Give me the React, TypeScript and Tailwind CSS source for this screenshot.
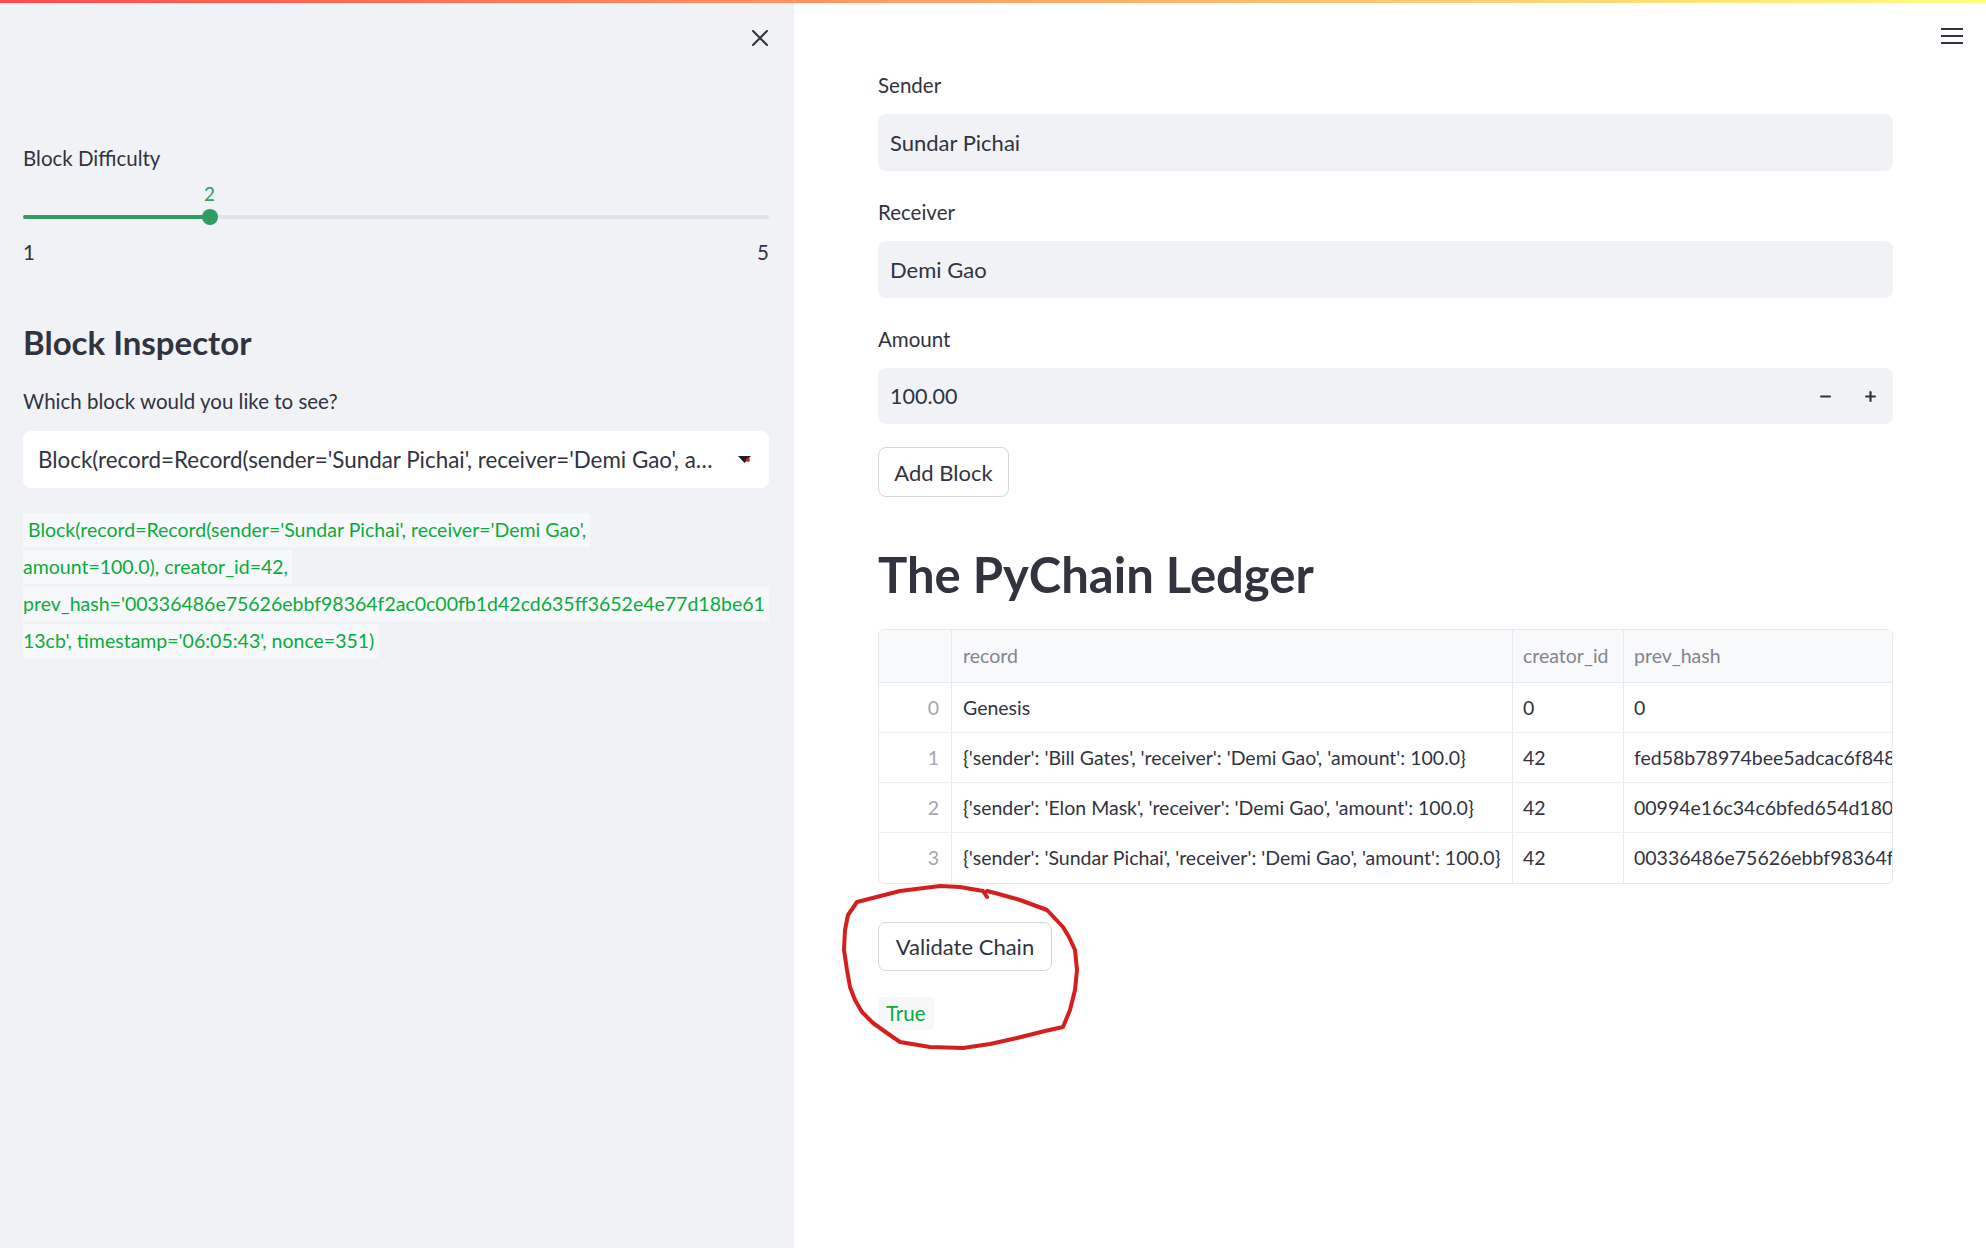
import React from 'react';
import { Minus, Plus } from 'lucide-react';

const rows = [
  { idx: 0, record: 'Genesis', creator: '0', prev: '0' },
  {
    idx: 1,
    record: "{'sender': 'Bill Gates', 'receiver': 'Demi Gao', 'amount': 100.0}",
    creator: '42',
    prev: 'fed58b78974bee5adcac6f848a1d0e4c7b2f93a5d61e08c4f7b3a92e1d5c6f08',
  },
  {
    idx: 2,
    record: "{'sender': 'Elon Mask', 'receiver': 'Demi Gao', 'amount': 100.0}",
    creator: '42',
    prev: '00994e16c34c6bfed654d180c2e7a1b39f4d8c0e52a6b71f3d9e84c05a2b6d1f',
  },
  {
    idx: 3,
    record: "{'sender': 'Sundar Pichai', 'receiver': 'Demi Gao', 'amount': 100.0}",
    creator: '42',
    prev: '00336486e75626ebbf98364f2ac0c00fb1d42cd635ff3652e4e77d18be6113cb',
  },
];

const codeLines = [
  "\u00a0Block(record=Record(sender='Sundar Pichai', receiver='Demi Gao',",
  'amount=100.0), creator_id=42,',
  "prev_hash='00336486e75626ebbf98364f2ac0c00fb1d42cd635ff3652e4e77d18be61",
  "13cb', timestamp='06:05:43', nonce=351)",
];

const Field = ({ label, value }: { label: string; value: string }) => (
  <div className="mb-[27px]">
    <div className="h-[28px] leading-[28px] text-[20.5px] mb-[15px]">{label}</div>
    <div className="h-[57px] rounded-[8px] bg-[#f0f2f6] flex items-center px-[12px] text-[22px]">{value}</div>
  </div>
);

export default function App() {
  return (
    <div className="w-[1986px] h-[1248px] flex flex-col bg-white text-[#31333f] font-['Lato','Liberation_Sans',sans-serif] overflow-hidden relative">
      {/* decoration bar */}
      <div className="h-[3px] w-full bg-[linear-gradient(90deg,#ff4b4b,#fffd80)]" />

      <div className="flex flex-1">
        {/* Sidebar */}
        <aside className="w-[794px] shrink-0 bg-[#f0f2f6] pl-[23px] pr-[25px]">
          <div className="mt-[27px] h-[16px] flex justify-end pr-[1px]">
            <svg width="16" height="16" viewBox="0 0 16 16" stroke="#31333f" strokeWidth="2" strokeLinecap="round">
              <path d="M1 1L15 15M15 1L1 15" />
            </svg>
          </div>

          <div className="mt-[98px] h-[28px] leading-[28px] text-[20.5px]">Block Difficulty</div>

          <div className="mt-[11px] relative h-[50px]">
            <div className="absolute left-[25%] -translate-x-1/2 top-0 text-[19px] leading-[22px] text-[#2f9c64]">2</div>
            <div className="absolute left-0 right-0 top-[32px] h-[4px] rounded-full bg-[#dfe3ea]" />
            <div className="absolute left-0 w-[25%] top-[32px] h-[4px] rounded-full bg-[#2f9c64]" />
            <div className="absolute left-[25%] -translate-x-1/2 top-[26px] w-[16px] h-[16px] rounded-full bg-[#2f9c64]" />
          </div>
          <div className="mt-[5px] flex justify-between h-[28px] leading-[28px] text-[20.5px]">
            <span>1</span>
            <span>5</span>
          </div>

          <h3 className="mt-[58px] h-[36px] leading-[36px] text-[33px] font-bold">Block Inspector</h3>

          <div className="mt-[27px] h-[28px] leading-[28px] text-[20.5px]">Which block would you like to see?</div>

          <div className="mt-[16px] h-[57px] rounded-[8px] bg-white flex items-center pl-[15px] pr-[18px]">
            <div className="flex-1 whitespace-nowrap overflow-hidden text-ellipsis text-[22.4px]">
              Block(record=Record(sender='Sundar Pichai', receiver='Demi Gao', a…
            </div>
            <div className="relative ml-[18px] w-[13px] h-[8px]">
              <svg width="13" height="8" viewBox="0 0 13 8">
                <path d="M0 0H13L6.5 7Z" fill="#1f1f24" />
              </svg>
              <div className="absolute right-[1px] top-[2px] w-[4px] h-[4px] rounded-full bg-[#e0242a]" />
            </div>
          </div>

          <div className="mt-[25px] flex flex-col gap-[3px] text-[19.5px] text-[#09ab3b]">
            {codeLines.map((l, i) => (
              <div key={i} className="w-fit h-[34px] leading-[34px] bg-[#f7f8fa] pr-[4px] whitespace-nowrap">
                {l}
              </div>
            ))}
          </div>
        </aside>

        {/* Main */}
        <main className="flex-1 relative pl-[84px]">
          <div className="absolute right-[23px] top-[25px] flex flex-col gap-[5px]">
            <div className="w-[22px] h-[2px] bg-[#31333f]" />
            <div className="w-[22px] h-[2px] bg-[#31333f]" />
            <div className="w-[22px] h-[2px] bg-[#31333f]" />
          </div>

          <div className="w-[1015px] pt-[68px]">
            <Field label="Sender" value="Sundar Pichai" />
            <Field label="Receiver" value="Demi Gao" />

            <div>
              <div className="h-[28px] leading-[28px] text-[20.5px] mb-[15px]">Amount</div>
              <div className="h-[56px] rounded-[8px] bg-[#f0f2f6] flex items-center pl-[12px] pr-[15px] text-[21.5px]">
                <span className="flex-1">100.00</span>
                <div className="flex items-center gap-[30px]">
                  <Minus size={15} strokeWidth={3.5} className="text-[#31333f]" />
                  <Plus size={15} strokeWidth={3.5} className="text-[#31333f]" />
                </div>
              </div>
            </div>

            <button className="mt-[23px] w-[131px] h-[50px] rounded-[8px] border border-[#d6d6d9] bg-white text-[22px]">
              Add Block
            </button>

            <h1 className="mt-[47px] h-[60px] leading-[60px] text-[49px] font-bold">The PyChain Ledger</h1>

            <div className="mt-[25px] border border-[#e6e9ef] rounded-[6px] overflow-hidden text-[19.5px]">
              <div className="flex h-[53px] bg-[#f8f9fb] border-b border-[#e6e9ef] text-[#83858c]">
                <div className="w-[73px] border-r border-[#e6e9ef]" />
                <div className="w-[561px] border-r border-[#e6e9ef] flex items-center px-[11px]">record</div>
                <div className="w-[111px] border-r border-[#e6e9ef] flex items-center px-[10px]">creator_id</div>
                <div className="flex-1 flex items-center px-[10px]">prev_hash</div>
              </div>
              {rows.map((r, i) => (
                <div key={r.idx} className={`flex h-[50px] ${i < rows.length - 1 ? 'border-b border-[#eef0f4]' : ''}`}>
                  <div className="w-[73px] border-r border-[#e6e9ef] flex items-center justify-end pr-[12px] text-[#a3a6ae]">{r.idx}</div>
                  <div className="w-[561px] border-r border-[#e6e9ef] flex items-center px-[11px] whitespace-nowrap overflow-hidden">{r.record}</div>
                  <div className="w-[111px] border-r border-[#e6e9ef] flex items-center px-[10px]">{r.creator}</div>
                  <div className="flex-1 min-w-0 flex items-center pl-[10px] whitespace-nowrap overflow-hidden">{r.prev}</div>
                </div>
              ))}
            </div>

            <button className="mt-[38px] block w-[174px] h-[49px] rounded-[8px] border border-[#d6d6d9] bg-white text-[22px]">
              Validate Chain
            </button>

            <div className="mt-[26px] w-fit h-[33px] leading-[33px] px-[8px] bg-[#f6f7f9] rounded-[4px] text-[20.5px] text-[#09ab3b]">
              True
            </div>
          </div>
        </main>
      </div>

      {/* hand-drawn annotation */}
      <svg className="absolute left-0 top-0 pointer-events-none" width="1986" height="1248">
        <path
          d="M987 897 L983 891 L960 887 L940 886 L900 891 L857 902 L848 915 L845 930 L844 950 L847 970 L850 987 L855 1000 L862 1012 L873 1023 L887 1033 L900 1042 L930 1047 L963 1048 L990 1044 L1017 1038 L1045 1031 L1063 1027 L1070 1010 L1075 990 L1077 970 L1075 950 L1069 937 L1063 927 L1047 910 L1020 900 L995 893 L987 891"
          fill="none"
          stroke="#d41f1f"
          strokeWidth="4"
          strokeLinejoin="round"
          strokeLinecap="round"
        />
      </svg>
    </div>
  );
}
